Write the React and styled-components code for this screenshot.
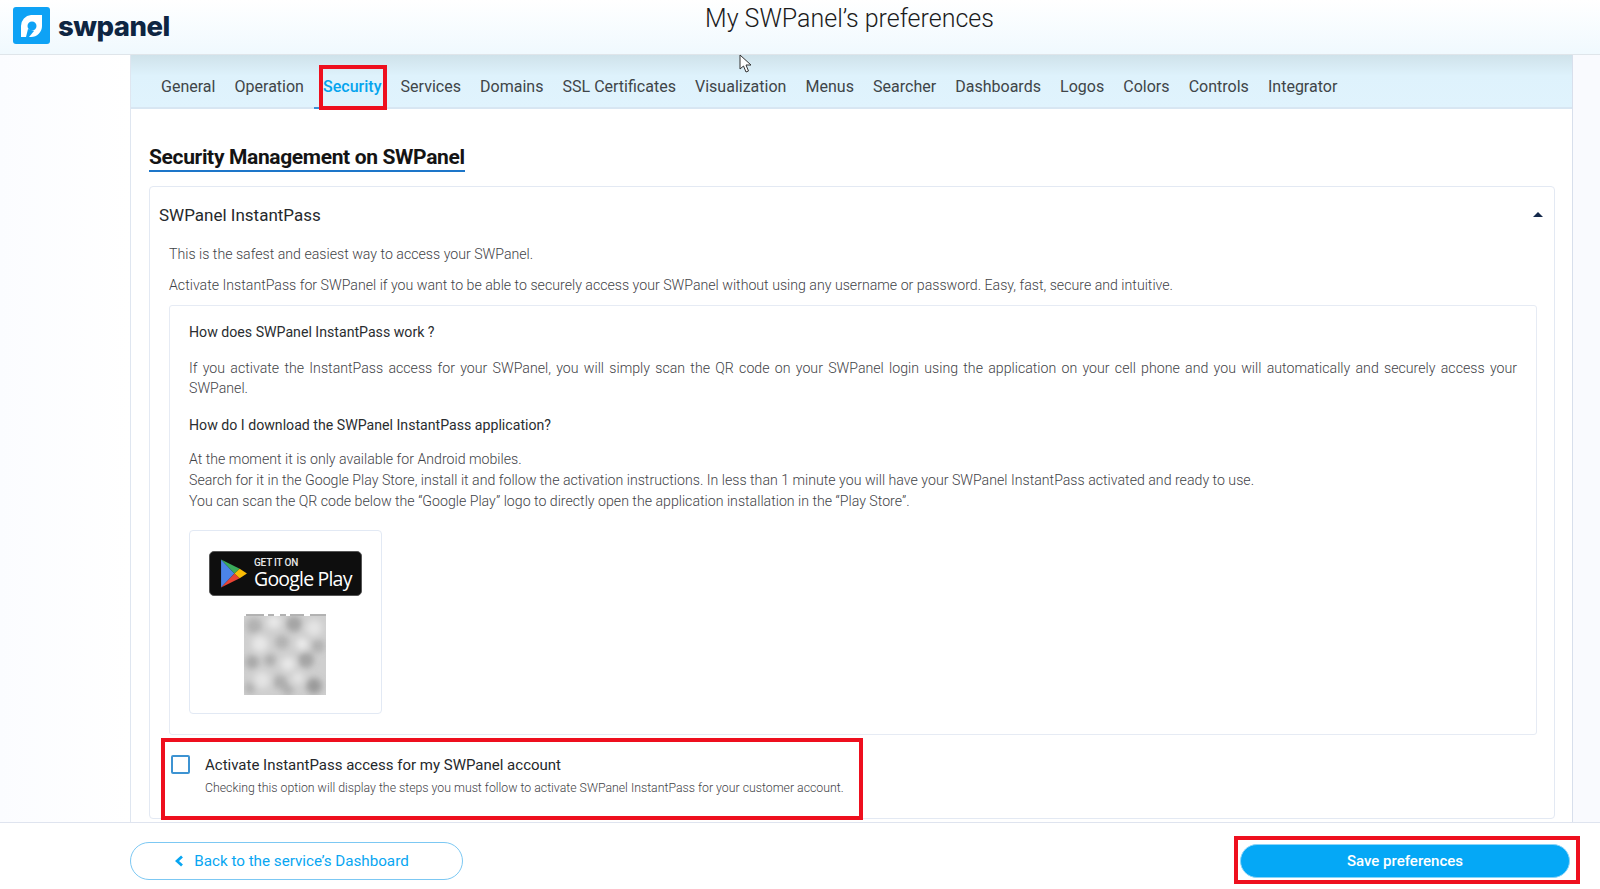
import React from 'react';
import styled, { createGlobalStyle } from 'styled-components';

const TABS = ['General', 'Operation', 'Security', 'Services', 'Domains', 'SSL Certificates', 'Visualization', 'Menus', 'Searcher', 'Dashboards', 'Logos', 'Colors', 'Controls', 'Integrator'];

// x, y, r, dark?, opacity - blobs of the blurred qr code
const QR_BLOBS = [
  [10, 12, 8, 1, 0.3], [30, 8, 7, 0, 0.7], [50, 10, 8, 1, 0.45], [70, 14, 8, 0, 0.6],
  [16, 30, 8, 0, 0.7], [38, 28, 7, 1, 0.3], [58, 30, 6, 0, 0.8], [74, 32, 7, 1, 0.3],
  [8, 48, 7, 1, 0.4], [26, 46, 6, 1, 0.35], [44, 50, 7, 0, 0.7], [62, 46, 8, 1, 0.45],
  [18, 66, 8, 0, 0.6], [36, 68, 7, 1, 0.35], [54, 64, 6, 0, 0.6], [70, 72, 8, 1, 0.55],
  [6, 74, 6, 1, 0.3], [44, 76, 6, 1, 0.3],
];

const GlobalStyle = createGlobalStyle`
  html, body {
    margin: 0;
    height: 100%;
    overflow: hidden;
    font-family: Roboto, "Liberation Sans", sans-serif;
    background: #fff;
  }
  * { box-sizing: border-box; }
`;

const Page = styled.div`
  position: relative;
  display: flex;
  flex-direction: column;
  height: 889px;
  background: linear-gradient(90deg, #fbfcff 0, #fff 130px, #fff 1572px, #f9fafe 1573px);
`;

const Header = styled.header`
  position: relative;
  display: flex;
  align-items: flex-start;
  height: 55px;
  flex: none;
  padding: 7px 0 0 13px;
  background: linear-gradient(180deg, #ffffff 0, #f0f9fe 100%);
  border-bottom: 1px solid #dfe5ea;
`;

const Brand = styled.div`
  display: flex;
  align-items: center;
  gap: 8px;
  width: 692px;
  height: 37px;
`;

const BrandName = styled.span`
  font-family: Inter, sans-serif;
  font-weight: 800;
  font-size: 27.5px;
  letter-spacing: -0.5px;
  color: #0e2542;
`;

const Title = styled.h1`
  margin: -2px 0 0;
  font-size: 25px;
  line-height: 28px;
  font-weight: 300;
  color: #1b1b1b;
`;

const Main = styled.main`
  flex: 1;
  min-height: 0;
  overflow: hidden;
  padding: 0 27px 0 130px;
`;

const Panel = styled.div`
  height: 100%;
  display: flex;
  flex-direction: column;
  border-left: 1px solid #dfe6f0;
  border-right: 1px solid #d8dfec;
`;

const TabBar = styled.nav`
  display: flex;
  gap: 19.15px;
  height: 54px;
  flex: none;
  padding: 0 0 0 30px;
  background: linear-gradient(180deg, #cfe2ea 0, #def2fc 40%, #e0f3fd 100%);
  border-bottom: 2px solid #d8e6f2;
`;

const Tab = styled.a`
  position: relative;
  display: flex;
  align-items: center;
  height: 54px;
  padding-top: 8px;
  font-size: 16px;
  color: ${p => (p.$active ? '#05a4ee' : '#404548')};
  font-weight: ${p => (p.$active ? 500 : 400)};
  ${p => p.$active && `
    &::before {
      content: '';
      position: absolute;
      left: -9px;
      right: -6px;
      bottom: 0;
      height: 2px;
      background: #3a8fd8;
    }
    &::after {
      content: '';
      position: absolute;
      left: -4px;
      right: -6px;
      top: 10px;
      bottom: -1px;
      border: 4px solid #ee0f1e;
    }
  `}
`;

const Content = styled.section`
  flex: 1;
  min-height: 0;
  padding: 35px 17px 0 18px;
`;

const Heading = styled.h2`
  display: inline-block;
  margin: 0 0 14px;
  font-size: 21px;
  line-height: 26px;
  font-weight: 700;
  letter-spacing: -0.35px;
  color: #141414;
  border-bottom: 2px solid #1d76c9;
`;

const Accordion = styled.div`
  height: 633px;
  padding: 0 17px 0 9px;
  border: 1px solid #e3e9f3;
  border-radius: 4px;
`;

const AccordionHead = styled.div`
  display: flex;
  align-items: center;
  justify-content: space-between;
  height: 57px;
  padding-bottom: 2px;
  font-size: 17px;
  color: #26292c;
`;

const Caret = styled.span`
  width: 0;
  height: 0;
  margin-right: -6px;
  border-left: 5px solid transparent;
  border-right: 5px solid transparent;
  border-bottom: 5px solid #14294b;
`;

const Body = styled.div`
  padding-left: 10px;
`;

const Lead = styled.p`
  margin: 0 0 ${p => p.$gap || 0}px;
  font-size: 14.17px;
  line-height: 20px;
  font-weight: 300;
  color: #3f4347;
`;

const InfoBox = styled.div`
  height: 430px;
  margin-top: 10px;
  padding: 16px 19px;
  border: 1px solid #e6ebf4;
  border-radius: 3px;
`;

const Question = styled.h4`
  margin: 0 0 ${p => p.$gap || 16}px;
  font-size: 14.15px;
  line-height: 20px;
  font-weight: 400;
  color: #2a2d30;
`;

const Answer = styled.p`
  margin: 0 0 ${p => p.$gap || 17}px;
  font-size: 14.17px;
  line-height: ${p => p.$lh || 20}px;
  font-weight: 300;
  color: #3f4347;
  text-align: ${p => (p.$justify ? 'justify' : 'left')};
`;

const StoreCard = styled.div`
  display: flex;
  flex-direction: column;
  align-items: center;
  width: 193px;
  height: 184px;
  margin-top: 18px;
  padding-top: 20px;
  border: 1px solid #e2e9f4;
  border-radius: 4px;
`;

const Badge = styled.div`
  display: flex;
  align-items: center;
  gap: 6px;
  width: 153px;
  height: 45px;
  padding-left: 10px;
  background: #0e0e0e;
  border: 1px solid #555;
  border-radius: 5px;
  color: #fff;
`;

const BadgeText = styled.div`
  display: flex;
  flex-direction: column;
`;

const BadgeSmall = styled.span`
  font-size: 10px;
  line-height: 10px;
  font-weight: 500;
  letter-spacing: -0.2px;
  color: #e8e8e8;
`;

const BadgeBig = styled.span`
  font-family: "Open Sans", sans-serif;
  font-size: 19.5px;
  line-height: 22px;
  letter-spacing: -0.8px;
  color: #fff;
`;

const QrCode = styled.svg`
  display: block;
  margin: 18px 2px 0 0;
`;

const ActivateBox = styled.div`
  display: flex;
  gap: 15px;
  width: 702px;
  height: 82px;
  margin: 3px 0 0 -8px;
  padding: 13px 0 0 6px;
  border: 4px solid #ee0f1e;
  background: #fff;
`;

const CheckBox = styled.span`
  flex: none;
  width: 19px;
  height: 19px;
  border: 2px solid #3d93d2;
  border-radius: 2px;
`;

const ActivateText = styled.div`
  display: flex;
  flex-direction: column;
  gap: 4px;
`;

const ActivateLabel = styled.span`
  font-size: 15px;
  line-height: 20px;
  color: #25282b;
`;

const ActivateHint = styled.span`
  font-size: 12.3px;
  line-height: 18px;
  font-weight: 300;
  color: #3f4347;
`;

const Footer = styled.footer`
  display: flex;
  align-items: flex-start;
  justify-content: space-between;
  height: 67px;
  flex: none;
  padding: 13px 20px 0 130px;
  background: #fff;
  border-top: 1px solid #dfe4ef;
`;

const BackButton = styled.a`
  display: flex;
  align-items: center;
  justify-content: center;
  gap: 10px;
  width: 333px;
  height: 38px;
  margin-top: 6px;
  padding-right: 9px;
  font-size: 15.2px;
  color: #08a6f2;
  border: 1px solid #7cc8f3;
  border-radius: 19px;
`;

const SaveFrame = styled.div`
  padding: 4px 6px 2px 2px;
  height: 48px;
  border: 4px solid #ee0f1e;
`;

const SaveButton = styled.button`
  display: block;
  width: 330px;
  height: 34px;
  padding: 0;
  font-family: inherit;
  font-size: 15px;
  font-weight: 500;
  color: #fff;
  background: #05a8f6;
  border: 1px solid #8ad4f8;
  border-radius: 17px;
`;

const Cursor = styled.svg`
  position: absolute;
  left: 739px;
  top: 54px;
`;

const Logo = () => (
  <svg width="37" height="37" viewBox="0 0 37 37">
    <rect width="37" height="37" rx="3" fill="#0ea2f5" />
    <path
      fillRule="evenodd"
      d="M18 8 H29 V19 A11 11 0 0 1 18 30 H8 V19 A10.5 11 0 0 1 18 8 Z M19 14.5 A4.5 4.5 0 1 0 19 23.5 A4.5 4.5 0 1 0 19 14.5 Z"
      fill="#fff"
    />
    <path d="M15 22 L21 24 L16 30 H13 Z" fill="#0ea2f5" />
  </svg>
);

const PlayIcon = () => (
  <svg width="28" height="33" viewBox="0 0 27 31">
    <path d="M1 2 L14 15.5 L1 29 Z" fill="#4b84e8" />
    <path d="M1 2 L19 11 L14 15.5 Z" fill="#3bab5b" />
    <path d="M1 29 L19 20 L14 15.5 Z" fill="#e94335" />
    <path d="M19 11 L26 15.5 L19 20 L14 15.5 Z" fill="#fabc05" />
  </svg>
);

const BlurredQr = () => (
  <QrCode width="82" height="81" viewBox="0 0 82 81">
    <defs>
      <filter id="qr-blur" x="-20%" y="-20%" width="140%" height="140%">
        <feGaussianBlur stdDeviation="3.2" />
      </filter>
      <clipPath id="qr-clip">
        <rect x="0" y="2" width="82" height="79" />
      </clipPath>
    </defs>
    <path d="M2 1 H20 M24 1 H30 M36 1 H42 M46 1 H60 M66 1 H82" stroke="#666" strokeWidth="1" />
    <g clipPath="url(#qr-clip)">
      <rect x="0" y="2" width="82" height="79" fill="#cfcfcf" />
      <g filter="url(#qr-blur)">
        {QR_BLOBS.map(([x, y, r, dark, o], i) => (
          <circle key={i} cx={x} cy={y} r={r} fill={dark ? '#6e6e6e' : '#f2f2f2'} opacity={o} />
        ))}
      </g>
    </g>
  </QrCode>
);

export default function App() {
  return (
    <Page>
      <GlobalStyle />
      <Header>
        <Brand>
          <Logo />
          <BrandName>swpanel</BrandName>
        </Brand>
        <Title>My SWPanel’s preferences</Title>
      </Header>
      <Main>
        <Panel>
          <TabBar>
            {TABS.map(t => (
              <Tab key={t} $active={t === 'Security'}>{t}</Tab>
            ))}
          </TabBar>
          <Content>
            <Heading>Security Management on SWPanel</Heading>
            <Accordion>
              <AccordionHead>
                SWPanel InstantPass
                <Caret />
              </AccordionHead>
              <Body>
                <Lead $gap={11}>This is the safest and easiest way to access your SWPanel.</Lead>
                <Lead>Activate InstantPass for SWPanel if you want to be able to securely access your SWPanel without using any username or password. Easy, fast, secure and intuitive.</Lead>
                <InfoBox>
                  <Question>How does SWPanel InstantPass work ?</Question>
                  <Answer $justify>If you activate the InstantPass access for your SWPanel, you will simply scan the QR code on your SWPanel login using the application on your cell phone and you will automatically and securely access your SWPanel.</Answer>
                  <Question $gap={14}>How do I download the SWPanel InstantPass application?</Question>
                  <Answer $lh={21} $gap={0}>
                    At the moment it is only available for Android mobiles.<br />
                    Search for it in the Google Play Store, install it and follow the activation instructions. In less than 1 minute you will have your SWPanel InstantPass activated and ready to use.<br />
                    You can scan the QR code below the “Google Play” logo to directly open the application installation in the “Play Store”.
                  </Answer>
                  <StoreCard>
                    <Badge>
                      <PlayIcon />
                      <BadgeText>
                        <BadgeSmall>GET IT ON</BadgeSmall>
                        <BadgeBig>Google Play</BadgeBig>
                      </BadgeText>
                    </Badge>
                    <BlurredQr />
                  </StoreCard>
                </InfoBox>
                <ActivateBox>
                  <CheckBox />
                  <ActivateText>
                    <ActivateLabel>Activate InstantPass access for my SWPanel account</ActivateLabel>
                    <ActivateHint>Checking this option will display the steps you must follow to activate SWPanel InstantPass for your customer account.</ActivateHint>
                  </ActivateText>
                </ActivateBox>
              </Body>
            </Accordion>
          </Content>
        </Panel>
      </Main>
      <Footer>
        <BackButton>
          <svg width="9" height="13" viewBox="0 0 9 13">
            <path d="M7 1.5 L2 6 L7 10.5" fill="none" stroke="#08a6f2" strokeWidth="2.8" />
          </svg>
          Back to the service’s Dashboard
        </BackButton>
        <SaveFrame>
          <SaveButton>Save preferences</SaveButton>
        </SaveFrame>
      </Footer>
      <Cursor width="14" height="20" viewBox="0 0 14 20">
        <path d="M1 1 V15 L4.5 12 L7 18 L9.5 17 L7 11 L12 11 Z" fill="#fff" stroke="#333" strokeWidth="1" />
      </Cursor>
    </Page>
  );
}
